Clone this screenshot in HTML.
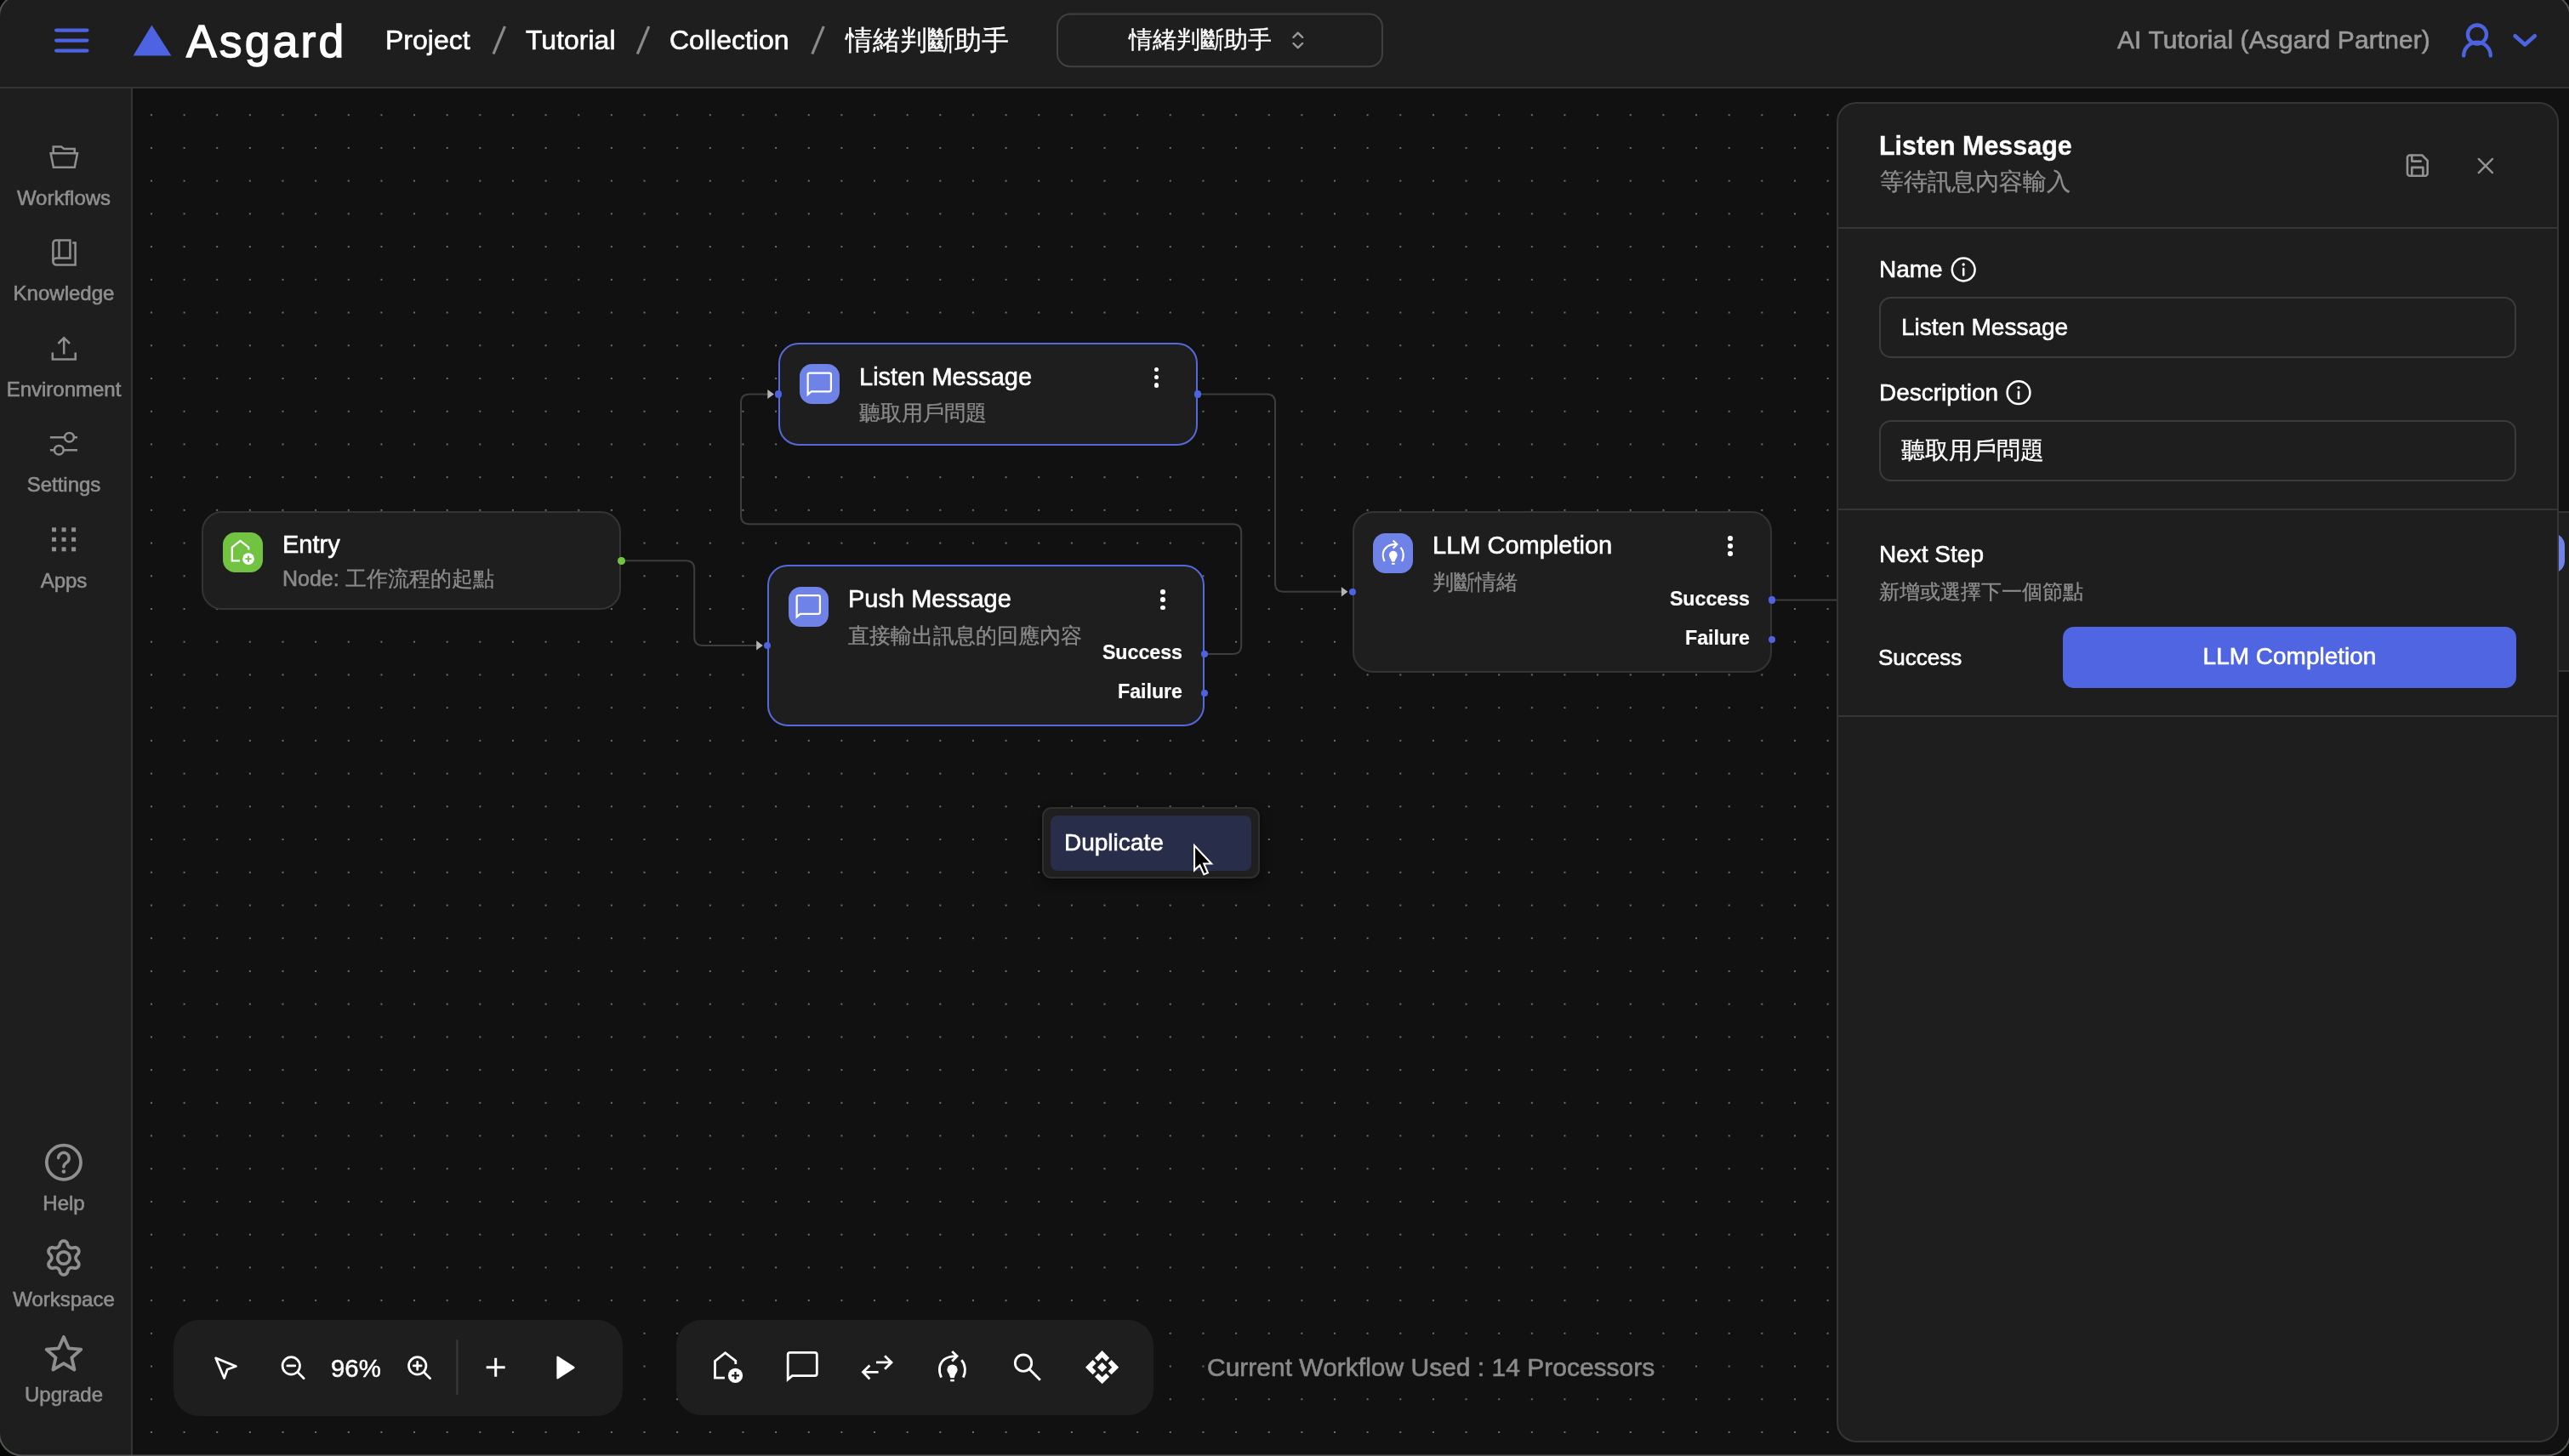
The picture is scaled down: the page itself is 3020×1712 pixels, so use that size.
<!DOCTYPE html>
<html lang="zh-Hant">
<head>
<meta charset="utf-8">
<title>Asgard</title>
<style>
*{box-sizing:border-box;margin:0;padding:0}
html,body{width:3020px;height:1712px;overflow:hidden;background:#111}
body{font-family:"Liberation Sans",sans-serif;color:#fff;position:relative}
.a{position:absolute}
.t{position:absolute;white-space:nowrap;line-height:1;will-change:transform;-webkit-text-stroke:0.6px}
svg{position:absolute;overflow:visible}
#canvas{position:absolute;left:156px;top:104px;width:2864px;height:1608px;background-color:#111;
 background-image:conic-gradient(from 270deg at 2.2px 2.2px,#6e6e6e 90deg,rgba(110,110,110,0) 0);
 background-size:38.648px 38.73px;background-position:20.95px 30.24px}
#header{position:absolute;left:0;top:0;width:3020px;height:104px;background:#1e1e1e;border-bottom:2px solid #343434}
#sidebar{position:absolute;left:0;top:104px;width:156px;height:1608px;background:#1e1e1e;border-right:2px solid #343434}
.cj{-webkit-text-stroke:0.3px;display:inline-block;text-align:justify;text-align-last:justify;text-justify:inter-character;white-space:nowrap;vertical-align:baseline}
.bc{font-size:32px;color:#fff}
.sbt{font-size:24px;color:#8f8f8f;width:150px;left:0;text-align:center}
.node{position:absolute;background:#1e1e1e;border:2px solid #343434;border-radius:24px}
.node.sel{border-color:#5569da}
.nt{font-size:29px;color:#fff}
.ns{font-size:25px;color:#8a8a8a}
.nl{font-size:23.2px;font-weight:bold;color:#fff;text-align:right;-webkit-text-stroke:0.2px}
.ico{position:absolute;width:47px;height:47px;border-radius:14.5px;background:#6b7fe8}
.hd{position:absolute;width:8.6px;height:8.6px;border-radius:50%;background:#4d63e1}
.tb{position:absolute;background:#1e1e1e;border-radius:30px}
#panel{position:absolute;left:2159px;top:120px;width:849px;height:1576px;background:#1e1e1e;border:2px solid #353535;border-radius:23px}
.sep{position:absolute;left:2161px;width:845px;height:2px;background:#353535}
.inp{position:absolute;left:2209px;width:749px;height:72px;border:2px solid #3b3b3b;border-radius:14px}
.pl{font-size:28px;color:#fff}
</style>
</head>
<body>
<main>
<div id="canvas"></div>
<svg style="left:0;top:0" width="3020" height="1712" viewBox="0 0 3020 1712"><g fill="none" stroke="#3d3d3d" stroke-width="2"><path d="M730.4,659.3 L806.2,659.3 Q816.2,659.3 816.2,669.3 L816.2,748.9 Q816.2,758.9 826.2,758.9 L890.0,758.9"/><path d="M1415.0,768.9 L1449.2,768.9 Q1459.2,768.9 1459.2,758.9 L1459.2,626.2 Q1459.2,616.2 1449.2,616.2 L881.0,616.2 Q871.0,616.2 871.0,606.2 L871.0,473.5 Q871.0,463.5 881.0,463.5 L903.0,463.5"/><path d="M1408.7,463.5 L1489.0,463.5 Q1499.0,463.5 1499.0,473.5 L1499.0,685.8 Q1499.0,695.8 1509.0,695.8 L1578.0,695.8"/><path d="M2083,705.6 H2200"/></g><polygon points="896.8,758.9 889.2,753.3 889.2,764.5" fill="#b4b4b4"/><polygon points="909.9,463.5 902.3,457.9 902.3,469.1" fill="#b4b4b4"/><polygon points="1584.5,695.8 1576.9,690.2 1576.9,701.4" fill="#b4b4b4"/></svg>
<section><div class="node" style="left:2943.0px;top:601.2px;width:400.0px;height:189.3px"></div><div class="ico" style="left:2967.8px;top:626.5px;background:#6f82e7"></div><svg style="left:0;top:0" width="3020" height="1712" viewBox="0 0 3020 1712"><g transform="translate(2991.30,649.80) scale(0.800) translate(-943.25,-1606.50)"><path fill="none" stroke="#fff" stroke-width="2.8" stroke-linejoin="miter" d="M928.7,1590.4 H957.8 a2.5,2.5 0 0 1 2.5,2.5 V1615.1 a2.5,2.5 0 0 1 -2.5,2.5 H931.3 L926.2,1621.9 V1592.9 a2.5,2.5 0 0 1 2.5,-2.5 Z"/></g></svg><div class="t nt" style="left:3037.6px;top:627.0px"></div><div class="t ns" style="left:3037.5px;top:671.7px"></div></section>
<section><div class="node" style="left:237.0px;top:601.0px;width:493.0px;height:116.0px"></div><div class="ico" style="left:261.8px;top:626.3px;background:#72c341"></div><svg style="left:0;top:0" width="3020" height="1712" viewBox="0 0 3020 1712"><g transform="translate(285.30,649.60) scale(0.800) translate(-856.15,-1607.90)"><g fill="none" stroke="#fff" stroke-width="2.8" stroke-linejoin="miter"><path d="M851.9,1620.1 H840.5 V1600.4 L852.6,1590.7 L864.8,1600.2 V1604"/></g><circle cx="864.5" cy="1617.4" r="8.6" fill="#fff"/><path d="M860,1617.4 H869 M864.5,1612.9 V1621.9" stroke="#72c341" stroke-width="2.3" fill="none"/></g></svg><div class="t nt" style="left:331.6px;top:625.5px">Entry</div><div class="t ns" style="left:331.5px;top:668.1px">Node: <span class="cj" style="width:175.00px">工作流程的起點</span></div><div class="hd" style="left:726.0px;top:655.0px;background:#72c341"></div></section>
<section><div class="node sel" style="left:915.0px;top:402.8px;width:492.8px;height:121.0px"></div><div class="ico" style="left:939.8px;top:428.1px;background:#6f82e7"></div><svg style="left:0;top:0" width="3020" height="1712" viewBox="0 0 3020 1712"><g transform="translate(963.30,451.40) scale(0.800) translate(-943.25,-1606.50)"><path fill="none" stroke="#fff" stroke-width="2.8" stroke-linejoin="miter" d="M928.7,1590.4 H957.8 a2.5,2.5 0 0 1 2.5,2.5 V1615.1 a2.5,2.5 0 0 1 -2.5,2.5 H931.3 L926.2,1621.9 V1592.9 a2.5,2.5 0 0 1 2.5,-2.5 Z"/></g></svg><div class="t nt" style="left:1009.6px;top:428.6px">Listen Message</div><div class="t ns" style="left:1009.5px;top:473.3px"><span class="cj" style="width:150.00px">聽取用戶問題</span></div><div class="a" style="left:1356.5px;top:431.6px;width:5.6px;height:5.6px;border-radius:50%;background:#fff"></div><div class="a" style="left:1356.5px;top:440.8px;width:5.6px;height:5.6px;border-radius:50%;background:#fff"></div><div class="a" style="left:1356.5px;top:450.0px;width:5.6px;height:5.6px;border-radius:50%;background:#fff"></div><div class="hd" style="left:910.9px;top:459.2px;background:#4d63e1"></div><div class="hd" style="left:1403.8px;top:459.2px;background:#4d63e1"></div></section>
<section><div class="node sel" style="left:902.0px;top:664.3px;width:513.6px;height:190.0px"></div><div class="ico" style="left:926.8px;top:689.6px;background:#6f82e7"></div><svg style="left:0;top:0" width="3020" height="1712" viewBox="0 0 3020 1712"><g transform="translate(950.30,712.90) scale(0.800) translate(-943.25,-1606.50)"><path fill="none" stroke="#fff" stroke-width="2.8" stroke-linejoin="miter" d="M928.7,1590.4 H957.8 a2.5,2.5 0 0 1 2.5,2.5 V1615.1 a2.5,2.5 0 0 1 -2.5,2.5 H931.3 L926.2,1621.9 V1592.9 a2.5,2.5 0 0 1 2.5,-2.5 Z"/></g></svg><div class="t nt" style="left:996.6px;top:690.0px">Push Message</div><div class="t ns" style="left:996.5px;top:734.8px"><span class="cj" style="width:275.00px">直接輸出訊息的回應內容</span></div><div class="a" style="left:1364.3px;top:693.1px;width:5.6px;height:5.6px;border-radius:50%;background:#fff"></div><div class="a" style="left:1364.3px;top:702.3px;width:5.6px;height:5.6px;border-radius:50%;background:#fff"></div><div class="a" style="left:1364.3px;top:711.5px;width:5.6px;height:5.6px;border-radius:50%;background:#fff"></div><div class="t nl" style="left:1190.3px;top:755.7px;width:200px">Success</div><div class="t nl" style="left:1190.3px;top:802.0px;width:200px">Failure</div><div class="hd" style="left:897.9px;top:754.6px;background:#4d63e1"></div><div class="hd" style="left:1411.6px;top:764.6px;background:#4d63e1"></div><div class="hd" style="left:1411.6px;top:810.7px;background:#4d63e1"></div></section>
<section><div class="node" style="left:1589.6px;top:601.2px;width:493.0px;height:190.3px"></div><div class="ico" style="left:1614.4px;top:626.5px;background:#6f82e7"></div><svg style="left:0;top:0" width="3020" height="1712" viewBox="0 0 3020 1712"><g transform="translate(1637.90,649.80) scale(0.800) translate(-1119.60,-1606.90)"><g fill="none" stroke="#fff" stroke-width="2.8" stroke-linecap="butt"><path d="M1106.6,1619.6 C1103,1612 1103.6,1603.5 1110.4,1598.2 C1114.5,1595.2 1119,1594.6 1124.5,1594.6"/><path d="M1119.2,1589 L1125,1594.6 L1119.2,1600.4"/><path d="M1130.3,1599.2 C1135.3,1605 1135.6,1613.5 1132.3,1619.6"/></g><circle cx="1119.5" cy="1610.5" r="6.1" fill="#fff"/><path d="M1115.2,1614.5 H1123.8 L1121.6,1620.3 H1117.4 Z" fill="#fff"/><rect x="1117.2" y="1622" width="4.6" height="2.4" fill="#fff"/></g></svg><div class="t nt" style="left:1684.2px;top:627.0px">LLM Completion</div><div class="t ns" style="left:1684.1px;top:671.7px"><span class="cj" style="width:100.00px">判斷情緒</span></div><div class="a" style="left:2031.3px;top:630.0px;width:5.6px;height:5.6px;border-radius:50%;background:#fff"></div><div class="a" style="left:2031.3px;top:639.2px;width:5.6px;height:5.6px;border-radius:50%;background:#fff"></div><div class="a" style="left:2031.3px;top:648.4px;width:5.6px;height:5.6px;border-radius:50%;background:#fff"></div><div class="t nl" style="left:1857.3px;top:692.6px;width:200px">Success</div><div class="t nl" style="left:1857.3px;top:738.9px;width:200px">Failure</div><div class="hd" style="left:1585.5px;top:691.5px;background:#4d63e1"></div><div class="hd" style="left:2078.6px;top:701.3px;background:#4d63e1"></div><div class="hd" style="left:2078.6px;top:747.6px;background:#4d63e1"></div></section>


<div class="a" style="left:1225px;top:949.3px;width:256px;height:84px;background:#1f1f1f;border:2px solid #2f2f2f;border-radius:11px;box-shadow:0 4px 14px rgba(0,0,0,.45)"></div>
<div class="a" style="left:1235px;top:959.3px;width:236.3px;height:64.4px;background:#282d49;border-radius:8px"></div>
<div class="t" style="left:1250.6px;top:977.1px;font-size:28px">Duplicate</div>
<svg style="left:1403px;top:993.4px" width="31.2" height="45.76" viewBox="0 0 30 44">
 <polygon points="1,1 1,29.2 7.2,23.4 11.8,33.8 16.2,31.9 11.7,21.6 20.3,21.6" fill="#000" stroke="#fff" stroke-width="2" stroke-linejoin="miter"/>
</svg>


<div class="tb" style="left:204px;top:1551.5px;width:527.5px;height:113px"></div>
<div class="tb" style="left:795px;top:1551.5px;width:561px;height:112.5px"></div>
<svg style="left:0;top:0" width="3020" height="1712" viewBox="0 0 3020 1712">
 <g fill="none" stroke="#fff" stroke-width="2.7" stroke-linejoin="round" stroke-linecap="round">
  <path d="M253.6,1596.8 L263.6,1620.6 L267.2,1610.2 L277.4,1606.6 Z"/>
  <circle cx="342.3" cy="1605.9" r="10.2"/>
  <path d="M349.8,1613.4 L357.2,1620.8 M337.8,1605.9 H346.8"/>
  <circle cx="490.7" cy="1605.9" r="10.2"/>
  <path d="M498.2,1613.4 L505.6,1620.8 M486.2,1605.9 H495.2 M490.7,1601.4 V1610.4"/>
 </g>
 <rect x="536.4" y="1575.2" width="2" height="65" fill="#3a3a3a"/>
 <path d="M571.7,1607.7 H593.7 M582.7,1596.7 V1618.7" stroke="#fff" stroke-width="3" fill="none"/>
 <polygon points="655.5,1595.6 655.5,1620.4 674.5,1608" fill="#fff" stroke="#fff" stroke-width="2.2" stroke-linejoin="round"/>
 <g fill="none" stroke="#fff" stroke-width="2.8" stroke-linejoin="miter"><path d="M851.9,1620.1 H840.5 V1600.4 L852.6,1590.7 L864.8,1600.2 V1604"/></g><circle cx="864.5" cy="1617.4" r="8.6" fill="#fff"/><path d="M860,1617.4 H869 M864.5,1612.9 V1621.9" stroke="#1e1e1e" stroke-width="2.3" fill="none"/><path fill="none" stroke="#fff" stroke-width="2.8" stroke-linejoin="miter" d="M928.7,1590.4 H957.8 a2.5,2.5 0 0 1 2.5,2.5 V1615.1 a2.5,2.5 0 0 1 -2.5,2.5 H931.3 L926.2,1621.9 V1592.9 a2.5,2.5 0 0 1 2.5,-2.5 Z"/><path fill="none" stroke="#fff" stroke-width="2.8" d="M1030,1601.9 H1047.5 M1040.1,1594.2 L1048,1601.9 L1040.1,1609.8 M1032.6,1613.3 H1015 M1022.4,1605.4 L1014.5,1613.3 L1022.4,1621.4"/><g fill="none" stroke="#fff" stroke-width="2.8" stroke-linecap="butt"><path d="M1106.6,1619.6 C1103,1612 1103.6,1603.5 1110.4,1598.2 C1114.5,1595.2 1119,1594.6 1124.5,1594.6"/><path d="M1119.2,1589 L1125,1594.6 L1119.2,1600.4"/><path d="M1130.3,1599.2 C1135.3,1605 1135.6,1613.5 1132.3,1619.6"/></g><circle cx="1119.5" cy="1610.5" r="6.1" fill="#fff"/><path d="M1115.2,1614.5 H1123.8 L1121.6,1620.3 H1117.4 Z" fill="#fff"/><rect x="1117.2" y="1622" width="4.6" height="2.4" fill="#fff"/><g fill="none" stroke="#fff" stroke-width="2.8"><circle cx="1203" cy="1602.7" r="9.7"/><path d="M1210,1609.8 L1222.8,1622.7"/></g><g fill="#fff"><polygon points="1295.60,1588.10 1304.20,1596.70 1300.20,1600.70 1295.60,1596.10 1291.00,1600.70 1287.00,1596.70"/><polygon points="1315.20,1607.70 1306.60,1616.30 1302.60,1612.30 1307.20,1607.70 1302.60,1603.10 1306.60,1599.10"/><polygon points="1295.60,1627.30 1287.00,1618.70 1291.00,1614.70 1295.60,1619.30 1300.20,1614.70 1304.20,1618.70"/><polygon points="1276.00,1607.70 1284.60,1599.10 1288.60,1603.10 1284.00,1607.70 1288.60,1612.30 1284.60,1616.30"/><polygon points="1295.60,1602.10 1301.20,1607.70 1295.60,1613.30 1290.00,1607.70"/></g>
</svg>
<div class="t" style="left:388.6px;top:1594.3px;font-size:29.4px;-webkit-text-stroke:0.5px #fff">96%</div>
<div class="t" style="left:1418.5px;top:1593.1px;font-size:30px;color:#8a8a8a;margin-left:0.9px">Current Workflow Used : 14 Processors</div>

</main>
<aside>

<div id="panel"></div>
<div class="sep" style="top:266.5px"></div>
<div class="sep" style="top:598.3px"></div>
<div class="sep" style="top:841px"></div>
<div class="t" style="left:2209.3px;top:155.7px;font-size:30.45px;font-weight:bold;-webkit-text-stroke:0.3px">Listen Message</div>
<div class="t" style="left:2210px;top:199.5px;font-size:28px;color:#8e8e8e"><span class="cj" style="width:224.00px">等待訊息內容輸入</span></div>
<svg style="left:0;top:0" width="3020" height="1712" viewBox="0 0 3020 1712">
 <g fill="none" stroke="#929292" stroke-width="2.6" stroke-linejoin="round" stroke-linecap="round">
  <path d="M2832.9,182.5 H2847.3 L2853.7,188.9 V203.9 a2.9,2.9 0 0 1 -2.9,2.9 H2832.9 a2.9,2.9 0 0 1 -2.9,-2.9 V185.4 a2.9,2.9 0 0 1 2.9,-2.9 Z"/>
  <path d="M2835.3,182.5 V189.6 H2845.9"/>
  <path d="M2835.3,206.8 V196.9 H2848.4 V206.8"/>
  <path d="M2913.8,186.9 L2930,203.1 M2930,186.9 L2913.8,203.1" stroke-width="2.4"/>
 </g>
 <g fill="none" stroke="#fff" stroke-width="2.5" stroke-linecap="round">
  <circle cx="2308.2" cy="317" r="13.4"/>
  <path d="M2308.2,316 V323.5"/>
  <circle cx="2373" cy="461.7" r="13.4"/>
  <path d="M2373,460.7 V468.2"/>
 </g>
 <circle cx="2308.2" cy="311" r="1.7" fill="#fff"/>
 <circle cx="2373" cy="455.7" r="1.7" fill="#fff"/>
</svg>
<div class="t pl" style="left:2209.1px;top:303px">Name</div>
<div class="inp" style="top:349px"></div>
<div class="t pl" style="left:2235.3px;top:370.7px">Listen Message</div>
<div class="t pl" style="left:2209px;top:447.6px">Description</div>
<div class="inp" style="top:494px"></div>
<div class="t pl" style="left:2235.1px;top:516.4px"><span class="cj" style="width:168.00px">聽取用戶問題</span></div>
<div class="t pl" style="left:2209px;top:637.8px">Next Step</div>
<div class="t" style="left:2209px;top:684.2px;font-size:24px;color:#8e8e8e"><span class="cj" style="width:240.00px">新增或選擇下一個節點</span></div>
<div class="t" style="left:2208.2px;top:760px;font-size:26px">Success</div>
<div class="a" style="left:2425px;top:736.6px;width:533px;height:72.3px;background:#4f65e2;border-radius:13px"></div>
<div class="t pl" style="left:2425px;top:758.3px;width:533px;text-align:center">LLM Completion</div>

</aside>
<header>
<div id="header"></div>

<svg style="left:0;top:0" width="3020" height="104" viewBox="0 0 3020 104">
 <g fill="#4d63e1">
  <rect x="64" y="33.5" width="40.5" height="4.2" rx="2.1"/>
  <rect x="64" y="45.5" width="40.5" height="4.2" rx="2.1"/>
  <rect x="64" y="57.5" width="40.5" height="4.2" rx="2.1"/>
  <polygon points="178.4,29.5 156.6,65.4 201.4,65.4"/>
 </g>
 <g stroke="#8a8a8a" stroke-width="3.2">
  <line x1="593.5" y1="31" x2="580" y2="63.5"/>
  <line x1="762.8" y1="31" x2="749.3" y2="63.5"/>
  <line x1="968.3" y1="31" x2="954.8" y2="63.5"/>
 </g>
 <rect x="1243" y="16.6" width="382" height="61.6" rx="15" fill="none" stroke="#404040" stroke-width="2"/>
 <g fill="none" stroke="#9a9a9a" stroke-width="2.4" stroke-linecap="round" stroke-linejoin="round">
  <polyline points="1520.5,43.8 1525.8,38.6 1531.1,43.8"/>
  <polyline points="1520.5,51 1525.8,56.2 1531.1,51"/>
 </g>
 <g fill="none" stroke="#4d63e1" stroke-width="4.4" stroke-linecap="round">
  <circle cx="2912" cy="40.5" r="11"/>
  <path d="M2896.2,65.4 A15.8,15.8 0 0 1 2927.8,65.4"/>
  <polyline points="2956.6,42.2 2968.2,52.4 2979.8,42.2" stroke-width="4.6" stroke-linejoin="round"/>
 </g>
</svg>
<div class="t" style="left:219.2px;top:21.6px;font-size:53.5px;letter-spacing:3.15px;-webkit-text-stroke:1.4px #fff">Asgard</div>
<div class="t bc" style="left:453px;top:31.2px">Project</div>
<div class="t bc" style="left:618px;top:31.2px">Tutorial</div>
<div class="t bc" style="left:786.5px;top:31.2px">Collection</div>
<div class="t bc" style="left:993.5px;top:31.2px"><span class="cj" style="width:192.00px">情緒判斷助手</span></div>
<div class="t" style="left:1326.5px;top:33.4px;font-size:28px"><span class="cj" style="width:168.00px">情緒判斷助手</span></div>
<div class="t" style="left:2489px;top:32.4px;font-size:30px;letter-spacing:0.1px;color:#9a9a9a">AI Tutorial (Asgard Partner)</div>

</header>
<nav>
<div id="sidebar"></div>

<svg style="left:0;top:104px" width="154" height="1608" viewBox="0 104 154 1608">
 <g fill="none" stroke="#8f8f8f" stroke-width="2.5" stroke-linejoin="miter">
  <path d="M62.7,180.2 V172.6 H72 L75.2,175.1 H87.7 V180.2"/>
  <path d="M59.6,180.2 H91 L87.7,196.8 H62.9 Z"/>
  <path d="M65.9,282.5 H82.4 V303.6 H66.3 a3.95,3.95 0 0 0 0,7.9 H88.6 V285.6 H85.2"/>
  <path d="M62.4,307.5 V286 a3.5,3.5 0 0 1 3.5,-3.5"/>
  <path d="M69.5,282.5 V303.6"/>
  <path d="M75.2,416.6 V397.4 M68.4,404 L75.2,397.2 L82,404"/>
  <path d="M61.8,414.6 V422.4 H88.7 V414.6"/>
  <path d="M58.9,514.2 H76 M87,514.2 H91"/>
  <circle cx="81.5" cy="514.2" r="5.3"/>
  <path d="M58.9,529.2 H63.8 M74.8,529.2 H91"/>
  <circle cx="69.3" cy="529.2" r="5.3"/>
 </g>
 <g fill="#8f8f8f"><rect x="61.00" y="620.30" width="5" height="5"/><rect x="72.55" y="620.30" width="5" height="5"/><rect x="84.10" y="620.30" width="5" height="5"/><rect x="61.00" y="631.80" width="5" height="5"/><rect x="72.55" y="631.80" width="5" height="5"/><rect x="84.10" y="631.80" width="5" height="5"/><rect x="61.00" y="643.30" width="5" height="5"/><rect x="72.55" y="643.30" width="5" height="5"/><rect x="84.10" y="643.30" width="5" height="5"/></g>
 <g fill="none" stroke="#8f8f8f" stroke-width="3.8" stroke-linejoin="round" stroke-linecap="round">
  <circle cx="74.9" cy="1366.7" r="20.1"/>
  <path d="M68.6,1361.6 a6.3,6.3 0 1 1 9.6,5.4 c-2.2,1.4 -3.3,2.6 -3.3,5" stroke-width="3.4"/>
  <path d="M89.00,1479.00 L89.04,1479.49 L89.14,1480.00 L89.32,1480.52 L89.57,1481.06 L89.88,1481.64 L90.28,1482.27 L90.82,1482.97 L91.82,1483.85 L92.28,1484.65 L92.55,1485.42 L92.69,1486.19 L92.71,1486.93 L92.63,1487.65 L92.43,1488.32 L92.13,1488.95 L91.74,1489.52 L91.25,1490.03 L90.68,1490.46 L90.02,1490.81 L89.29,1491.07 L88.48,1491.23 L87.56,1491.22 L86.29,1490.80 L85.42,1490.69 L84.68,1490.66 L84.02,1490.67 L83.42,1490.73 L82.88,1490.84 L82.40,1491.00 L81.95,1491.21 L81.54,1491.49 L81.16,1491.83 L80.80,1492.25 L80.45,1492.73 L80.10,1493.30 L79.76,1493.96 L79.42,1494.77 L79.16,1496.07 L78.70,1496.88 L78.16,1497.50 L77.57,1498.00 L76.94,1498.39 L76.28,1498.67 L75.59,1498.84 L74.90,1498.90 L74.21,1498.84 L73.52,1498.67 L72.86,1498.39 L72.23,1498.00 L71.64,1497.50 L71.10,1496.88 L70.64,1496.07 L70.38,1494.77 L70.04,1493.96 L69.70,1493.30 L69.35,1492.73 L69.00,1492.25 L68.64,1491.83 L68.26,1491.49 L67.85,1491.21 L67.40,1491.00 L66.92,1490.84 L66.38,1490.73 L65.78,1490.67 L65.12,1490.66 L64.38,1490.69 L63.51,1490.80 L62.24,1491.22 L61.32,1491.23 L60.51,1491.07 L59.78,1490.81 L59.12,1490.46 L58.55,1490.03 L58.06,1489.52 L57.67,1488.95 L57.37,1488.32 L57.17,1487.65 L57.09,1486.93 L57.11,1486.19 L57.25,1485.42 L57.52,1484.65 L57.98,1483.85 L58.98,1482.97 L59.52,1482.27 L59.92,1481.64 L60.23,1481.06 L60.48,1480.52 L60.66,1480.00 L60.76,1479.49 L60.80,1479.00 L60.76,1478.51 L60.66,1478.00 L60.48,1477.48 L60.23,1476.94 L59.92,1476.36 L59.52,1475.73 L58.98,1475.03 L57.98,1474.15 L57.52,1473.35 L57.25,1472.58 L57.11,1471.81 L57.09,1471.07 L57.17,1470.35 L57.37,1469.68 L57.67,1469.05 L58.06,1468.48 L58.55,1467.97 L59.12,1467.54 L59.78,1467.19 L60.51,1466.93 L61.32,1466.77 L62.24,1466.78 L63.51,1467.20 L64.38,1467.31 L65.12,1467.34 L65.78,1467.33 L66.38,1467.27 L66.92,1467.16 L67.40,1467.00 L67.85,1466.79 L68.26,1466.51 L68.64,1466.17 L69.00,1465.75 L69.35,1465.27 L69.70,1464.70 L70.04,1464.04 L70.38,1463.23 L70.64,1461.93 L71.10,1461.12 L71.64,1460.50 L72.23,1460.00 L72.86,1459.61 L73.52,1459.33 L74.21,1459.16 L74.90,1459.10 L75.59,1459.16 L76.28,1459.33 L76.94,1459.61 L77.57,1460.00 L78.16,1460.50 L78.70,1461.12 L79.16,1461.93 L79.42,1463.23 L79.76,1464.04 L80.10,1464.70 L80.45,1465.27 L80.80,1465.75 L81.16,1466.17 L81.54,1466.51 L81.95,1466.79 L82.40,1467.00 L82.88,1467.16 L83.42,1467.27 L84.02,1467.33 L84.68,1467.34 L85.42,1467.31 L86.29,1467.20 L87.56,1466.78 L88.48,1466.77 L89.29,1466.93 L90.02,1467.19 L90.68,1467.54 L91.25,1467.97 L91.74,1468.48 L92.13,1469.05 L92.43,1469.68 L92.63,1470.35 L92.71,1471.07 L92.69,1471.81 L92.55,1472.58 L92.28,1473.35 L91.82,1474.15 L90.82,1475.03 L90.28,1475.73 L89.88,1476.36 L89.57,1476.94 L89.32,1477.48 L89.14,1478.00 L89.04,1478.51Z"/>
  <circle cx="74.9" cy="1479" r="7.2"/>
  <path d="M74.90,1572.00 L80.72,1585.29 L95.16,1586.72 L84.32,1596.36 L87.42,1610.53 L74.90,1603.20 L62.38,1610.53 L65.48,1596.36 L54.64,1586.72 L69.08,1585.29Z"/>
 </g>
 <circle cx="74.9" cy="1377.6" r="2.3" fill="#8f8f8f"/>
</svg>
<div class="t sbt" style="top:220.7px">Workflows</div>
<div class="t sbt" style="top:333.3px">Knowledge</div>
<div class="t sbt" style="top:445.9px">Environment</div>
<div class="t sbt" style="top:558.4px">Settings</div>
<div class="t sbt" style="top:671px">Apps</div>
<div class="t sbt" style="top:1403px">Help</div>
<div class="t sbt" style="top:1515.6px">Workspace</div>
<div class="t sbt" style="top:1628.2px">Upgrade</div>

</nav>

<svg style="left:0;top:0" width="3020" height="1712" viewBox="0 0 3020 1712">
 <path fill-rule="evenodd" fill="#060806" d="M-20,-20 H3040 V1732 H-20 Z M27,-8 H2994 A28,28 0 0 1 3022,20 V1684.4 A28,28 0 0 1 2994,1712.4 H27 A28,28 0 0 1 -1,1684.4 V20 A28,28 0 0 1 27,-8 Z"/>
 <path fill="none" stroke="#555" stroke-width="2" d="M26,-7 H2994.5 A27,27 0 0 1 3021.5,20 V1684.4 A27,27 0 0 1 2994.5,1711.4 H26 A27,27 0 0 1 -1,1684.4 V20 A27,27 0 0 1 26,-7 Z"/>
</svg>

</body>
</html>
